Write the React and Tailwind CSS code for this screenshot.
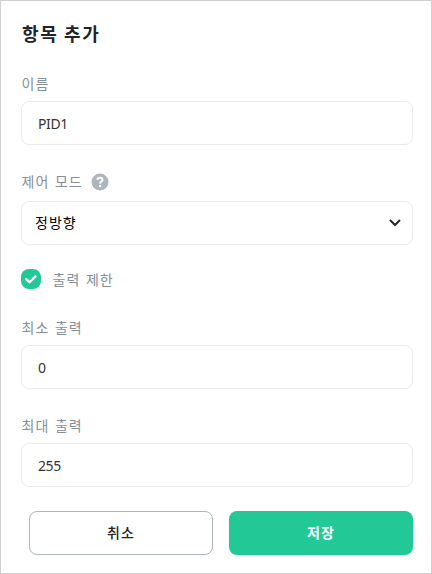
import React from 'react';

const Label = ({ children }) => (
  <div className="flex h-5 items-center pl-[0.5px] text-[14px] leading-5 tracking-[1px] [word-spacing:1.5px] text-[#868e96]">
    {children}
  </div>
);

const TextField = ({ label, value }) => (
  <div>
    <Label>{label}</Label>
    <input
      type="text"
      defaultValue={value}
      className="mt-2 block h-11 w-full rounded-lg border border-[#e9ecef] bg-white pr-4 pl-4 font-['Noto_Sans'] text-[14px] tracking-[-0.4px] text-[#333333] outline-none"
    />
  </div>
);

const HelpIcon = () => (
  <svg className="mt-px ml-2 h-[18px] w-[18px]" viewBox="0 0 18 18" fill="none">
    <circle cx="9" cy="9" r="8.5" fill="#adb5bd" />
    <path
      d="M6.5 7.1C6.5 5.6 7.6 4.8 9 4.8C10.5 4.8 11.5 5.6 11.5 6.9C11.5 8.5 9.1 8.6 9.1 10.5"
      stroke="#fff"
      strokeWidth="2"
    />
    <circle cx="9.1" cy="12.9" r="1.2" fill="#fff" />
  </svg>
);

const App = () => {
  return (
    <div className="h-[574px] w-[432px] border border-[#d0d0d0] bg-white pt-5 pr-[18px] pl-5 font-['Noto_Sans_CJK_KR',sans-serif]">
      <h1 className="-mt-px h-[26px] pl-px text-[18px] leading-[26px] font-bold tracking-[1.6px] text-[#212529]">
        항목 추가
      </h1>

      <div className="mt-[27px]">
        <TextField label="이름" value="PID1" />
      </div>

      {/* control mode */}
      <div className="mt-[26px]">
        <Label>
          제어 모드
          <HelpIcon />
        </Label>
        <button className="mt-[10px] flex h-11 w-full items-center justify-between rounded-lg border border-[#e9ecef] bg-white pr-[11px] pb-px pl-[13px] text-[14px] tracking-[1px] text-black">
          정방향
          <svg className="h-3 w-3" viewBox="0 0 12 12" fill="none">
            <path d="M1 3L6 8L11 3" stroke="#25282b" strokeWidth="2" />
          </svg>
        </button>
      </div>

      {/* output limit */}
      <div className="mt-6 flex h-5 items-center">
        <span className="mr-[11px] flex h-5 w-5 items-center justify-center rounded-lg bg-[#22c997]">
          <svg className="h-5 w-5" viewBox="0 0 20 20" fill="none">
            <path
              d="M5.2 10.1L8.5 13.2L14.4 7.4"
              stroke="#fff"
              strokeWidth="2.3"
              strokeLinecap="round"
              strokeLinejoin="round"
            />
          </svg>
        </span>
        <Label>출력 제한</Label>
      </div>

      <div className="mt-7 flex flex-col gap-[26px]">
        <TextField label="최소 출력" value="0" />
        <TextField label="최대 출력" value="255" />
      </div>

      <div className="mt-6 ml-2 grid grid-cols-2 gap-4">
        <button className="h-11 rounded-lg border border-[#adb5bd] pb-px text-[14px] font-medium tracking-[1px] text-[#212529]">
          취소
        </button>
        <button className="h-11 rounded-lg bg-[#22c997] pb-px text-[14px] font-bold tracking-[1px] text-white">
          저장
        </button>
      </div>
    </div>
  );
};

export default App;
